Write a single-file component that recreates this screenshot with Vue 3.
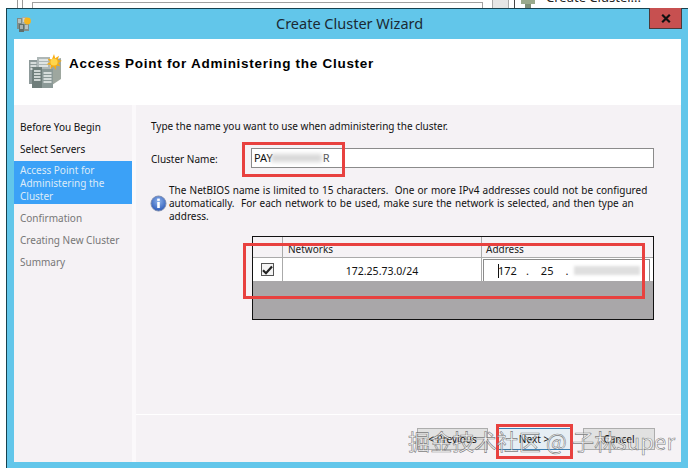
<script setup>
const steps = [
  { label: 'Before You Begin', state: 'done' },
  { label: 'Select Servers', state: 'done' },
  { label: 'Access Point for Administering the Cluster', state: 'active' },
  { label: 'Confirmation', state: 'off' },
  { label: 'Creating New Cluster', state: 'off' },
  { label: 'Summary', state: 'off' },
]
</script>

<template>
  <div class="page">
    <div class="backdrop">
      <i class="bar"></i>
      <i class="frame"></i>
      <i class="block"></i>
      <i class="rule"></i>
      <svg class="tiny" width="14" height="8" viewBox="0 0 14 8"><rect x="0" y="0" width="14" height="4" fill="#9aaa8c"/><rect x="4" y="4" width="6" height="4" fill="#7f8f78"/></svg>
      <span class="behind">Create Cluster...</span>
    </div>
    <div class="window">
      <div class="titlebar">
        <svg class="appicon" width="16" height="16" viewBox="0 0 16 16">
          <rect x="1" y="2" width="5" height="11" fill="#7f8c88"/>
          <rect x="6" y="1" width="5" height="12" fill="#a5b0ad"/>
          <rect x="3" y="8" width="5" height="8" fill="#5f6f6c"/>
          <rect x="8" y="8" width="5" height="7" fill="#7f8f8c"/>
          <path d="M2 4h3M2 6h3M7 3h3M7 5h3M4 10h3M4 12h3M9 10h3M9 12h3" stroke="#f2f5f4" stroke-width="1"/>
          <circle cx="11.500" cy="5" r="3.400" fill="#f6b51e"/>
        </svg>
        <div class="title">Create Cluster Wizard</div>
        <div class="close">
          <svg width="10" height="9" viewBox="0 0 10 9"><path d="M1.200 0.800 8.800 8.200M8.800 0.800 1.200 8.200" stroke="#111" stroke-width="2.200"/></svg>
        </div>
      </div>
      <div class="client">
        <header class="head">
          <svg class="bigicon" width="34" height="34" viewBox="0 0 34 34">
            <path d="M22 7 33 4v21l-9 6z" fill="#9ea79f"/>
            <path d="M1 6h9v24H1z" fill="#8d9999"/>
            <path d="M9 3h13v24H9z" fill="#aeb7b7"/>
            <path d="M4 13h10v21H4z" fill="#6f7e7b"/>
            <path d="M14 15h11v19H14z" fill="#8b9997"/>
            <path d="M2.500 9h6M2.500 12h6M2.500 15h2M11 6h9M11 9h9M11 12h9M6 17h6.500M6 20h6.500M6 23h6.500M6 26h6.500M15.500 19h8M15.500 22h8M15.500 25h8M15.500 28h8" stroke="#eef2f1" stroke-width="1.300"/>
            <path d="M26 0l1.200 4.300L31 1.800l-1.300 4.300 4.300.7-3.900 2.200 2.600 3.600-4.400-1-.5 4.400-2.500-3.700-3 3 .6-4.400-4.400-.6 3.800-2.300-2.800-3.400 4.400.8z" fill="#f7ac12"/>
            <circle cx="26" cy="8" r="3.600" fill="#ffd64c"/>
          </svg>
          <h1>Access Point for Administering the Cluster</h1>
        </header>
        <div class="body">
          <nav class="nav">
            <div v-for="s in steps" :key="s.label" class="step" :class="s.state">{{ s.label }}</div>
          </nav>
          <main class="main">
            <div class="pane">
              <p class="intro">Type the name you want to use when administering the cluster.</p>
              <div class="namerow">
                <label>Cluster Name:</label>
                <div class="input">PAY<span class="smear"></span><span class="tailtext">R</span></div>
              </div>
              <div class="note">
                <svg width="17" height="17" viewBox="0 0 17 17">
                  <defs>
                    <radialGradient id="ig" cx="50%" cy="35%" r="70%">
                      <stop offset="0" stop-color="#8fb4ec"/>
                      <stop offset="1" stop-color="#2452b4"/>
                    </radialGradient>
                  </defs>
                  <circle cx="8.500" cy="8.500" r="7.500" fill="url(#ig)" stroke="#7d8db0"/>
                  <rect x="7.200" y="7" width="2.600" height="6" fill="#fff"/>
                  <rect x="7.200" y="3.600" width="2.600" height="2.300" fill="#fff"/>
                </svg>
                <p>The NetBIOS name is limited to 15 characters.&nbsp; One or more IPv4 addresses could not be configured automatically.&nbsp; For each network to be used, make sure the network is selected, and then type an address.</p>
              </div>
              <div class="grid">
                <div class="gridhead">
                  <div class="c1"></div>
                  <div class="c2">Networks</div>
                  <div class="c3">Address</div>
                </div>
                <div class="gridrow">
                  <div class="c1">
                    <span class="check">
                      <svg width="11" height="10" viewBox="0 0 11 10"><path d="M1 5.200 4 8.200 10 1.500" fill="none" stroke="#222" stroke-width="2.200"/></svg>
                    </span>
                  </div>
                  <div class="c2 net">172.25.73.0/24</div>
                  <div class="c3 addr">
                    <div class="ip">
                      <i class="caret"></i><span class="o1">172</span><span class="d">.</span><span class="o2">25</span><span class="d">.</span><span class="smear2"></span>
                    </div>
                  </div>
                </div>
              </div>
            </div>
            <div class="footer">
              <div class="btn prev">&lt; Previous</div>
              <div class="btn next">Next &gt;</div>
              <div class="btn cancel">Cancel</div>
            </div>
          </main>
        </div>
      </div>
    </div>
    <i class="mark m1"></i>
    <i class="mark m2"></i>
    <i class="mark m3"></i>
    <div class="watermark">掘金技术社区 @ 子林super</div>
  </div>
</template>

<style scoped>
.page {
  position: relative;
  width: 688px;
  height: 468px;
  overflow: hidden;
  background: #fff;
  font-family: "Noto Sans", "Liberation Sans", sans-serif;
}
.backdrop {
  height: 8px;
  display: flex;
  overflow: hidden;
  background: #fff;
}
.backdrop i { display: block; flex: none; }
.bar { width: 6px; height: 8px; margin-left: 17px; border-left: 1px solid #999; border-right: 1px solid #999; box-sizing: border-box; }
.frame { width: 451px; height: 8px; margin-left: 9px; margin-top: 2px; border: 1px solid #a0a0a0; box-sizing: border-box; }
.block { width: 17px; height: 8px; margin-left: 9px; background: #e6e6e6; border-left: 1px solid #aaa; border-right: 1px solid #aaa; box-sizing: border-box; }
.rule { width: 1px; height: 8px; margin-left: 5px; background: #444; }
.tiny { margin-left: 6px; flex: none; }
.behind { margin-left: 11px; margin-top: -11px; font-size: 13px; line-height: 16px; color: #222; white-space: nowrap; }

.window {
  margin-left: 6px;
  height: 460px;
  box-sizing: border-box;
  background: #62c6ea;
  border-top: 1px solid #17424f;
  border-left: 1px solid #17424f;
  display: flex;
  flex-direction: column;
}
.titlebar {
  height: 29px;
  flex: none;
  display: flex;
  align-items: center;
  position: relative;
  padding-left: 9px;
}
.appicon { flex: none; }
.title {
  position: absolute;
  left: 269px;
  top: 5px;
  font-size: 14.500px;
  line-height: 19px;
  color: #1b2a33;
}
.close {
  position: absolute;
  left: 642px;
  top: -1px;
  width: 33px;
  height: 21px;
  box-sizing: border-box;
  background: #c75050;
  border: 1px solid #4a3a3a;
  border-top: 0;
  display: flex;
  align-items: center;
  justify-content: center;
}
.client {
  flex: 1;
  margin: 1px 7px 6px 7px;
  background: #fff;
  display: flex;
  flex-direction: column;
  min-height: 0;
}
.head {
  height: 66px;
  flex: none;
  display: flex;
  align-items: flex-start;
}
.bigicon { margin: 15px 0 0 14px; flex: none; }
.head h1 {
  margin: 16px 0 0 7px;
  font-family: "Liberation Sans", sans-serif;
  font-size: 13.500px;
  line-height: 17px;
  font-weight: 700;
  letter-spacing: 0.72px;
  color: #000;
}
.body {
  flex: 1;
  display: flex;
  min-height: 0;
  background: #fbf9fb;
  font-size: 10px;
  line-height: 13px;
  color: #111;
}
.nav {
  width: 118px;
  flex: none;
  background: #f5f2f5;
  padding-top: 12px;
  box-sizing: border-box;
}
.step {
  padding: 4px 6px 5px 6px;
  box-sizing: border-box;
}
.step.done { color: #111; }
.step.active { background: #3ba1f7; color: #dcebf8; padding: 3px 6px 1px 6px; margin-bottom: 4px; }
.step.off { color: #777; }
.main {
  margin-left: 4px;
  flex: 1;
  display: flex;
  flex-direction: column;
  background: #f5f2f5;
  min-width: 0;
}
.pane { flex: 1; padding: 15px 27px 0 15px; box-sizing: border-box; }
.intro { margin: 0; }
.namerow { display: flex; align-items: center; margin-top: 15px; height: 20px; }
.namerow label { width: 100px; flex: none; padding-top: 2px; }
.input {
  flex: 1;
  height: 20px;
  box-sizing: border-box;
  background: #fff;
  border: 1px solid #8b8b8b;
  padding: 2px 2px;
  display: flex;
  align-items: center;
  line-height: 14px;
  font-size: 11px;
}
.smear { width: 51px; height: 8px; background: #d8d8d8; filter: blur(2px); flex: none; margin-left: -2px; }
.tailtext { margin-left: 1px; color: #555; }
.note {
  display: flex;
  align-items: center;
  margin-top: 16px;
  margin-left: -1px;
  word-spacing: 0.6px;
}
.note svg { flex: none; margin-right: 2px; }
.note p { margin: 0; }
.grid {
  margin: 13px 0 0 101px;
  height: 84px;
  box-sizing: border-box;
  border: 1px solid #111;
  background: #a9a7a9;
}
.gridhead, .gridrow { display: flex; background: #fff; }
.gridhead { height: 21px; background: #f5f2f5; border-bottom: 1px solid #aaa; box-sizing: border-box; font-size: 10px; color: #222; }
.gridrow { height: 23px; background: #fff; }
.c1 { width: 30px; flex: none; border-right: 1px solid #aaa; box-sizing: border-box; display: flex; align-items: center; justify-content: center; }
.c2 { width: 199px; flex: none; border-right: 1px solid #aaa; box-sizing: border-box; padding: 6px 0 0 5px; }
.c3 { flex: 1; padding: 6px 0 0 4px; min-width: 0; }
.check { width: 13px; height: 13px; box-sizing: border-box; border: 1px solid #555; display: flex; align-items: center; justify-content: center; background: #f4f4f4; }
.net { text-align: center; padding: 7px 0 0; font-size: 10.500px; }
.addr { padding: 1px 3px 0 1px; }
.ip {
  height: 22px;
  box-sizing: border-box;
  border: 1px solid #8b8b8b;
  border-bottom: 0;
  display: flex;
  align-items: center;
  position: relative;
  padding-left: 14px;
  font-size: 11px;
}
.caret { position: absolute; left: 14px; top: 4px; width: 1px; height: 14px; background: #111; }
.o1 { margin-left: 0; }
.d { margin-left: 9px; }
.o2 { margin-left: 12px; }
.o2 + .d { margin-left: 12px; }
.smear2 { width: 66px; height: 9px; margin-left: 6px; background: #dfdfdf; filter: blur(1.500px); }
.footer {
  flex: none;
  height: 48px;
  border-top: 1px solid #fff;
  display: flex;
  justify-content: flex-end;
  padding: 13px 26px 0 0;
  box-sizing: border-box;
}
.btn {
  height: 22px;
  box-sizing: border-box;
  background: #e1e1e1;
  border: 1px solid #adadad;
  text-align: center;
  line-height: 20px;
  font-size: 10px;
  color: #111;
}
.prev { width: 71px; }
.next { width: 74px; margin-left: 9px; border-color: #3c7fb1; background: #e6eef4; }
.cancel { width: 72px; margin-left: 12px; }

.mark {
  position: absolute;
  box-sizing: border-box;
  border: 3px solid #e8413f;
  pointer-events: none;
}
.m1 { left: 242px; top: 142px; width: 103px; height: 35px; }
.m2 { left: 243px; top: 243px; width: 402px; height: 56px; }
.m3 { left: 496px; top: 424px; width: 77px; height: 35px; }
.watermark {
  position: absolute;
  left: 408px;
  top: 425px;
  font-family: "Noto Sans CJK SC", "Noto Sans", sans-serif;
  font-size: 22px;
  letter-spacing: 0.15px;
  line-height: 30px;
  white-space: nowrap;
  color: rgba(255, 255, 255, 0.6);
  -webkit-text-stroke: 0.6px rgba(70, 70, 70, 0.7);
}
</style>

<style>
html, body { margin: 0; overflow: hidden; }
</style>
